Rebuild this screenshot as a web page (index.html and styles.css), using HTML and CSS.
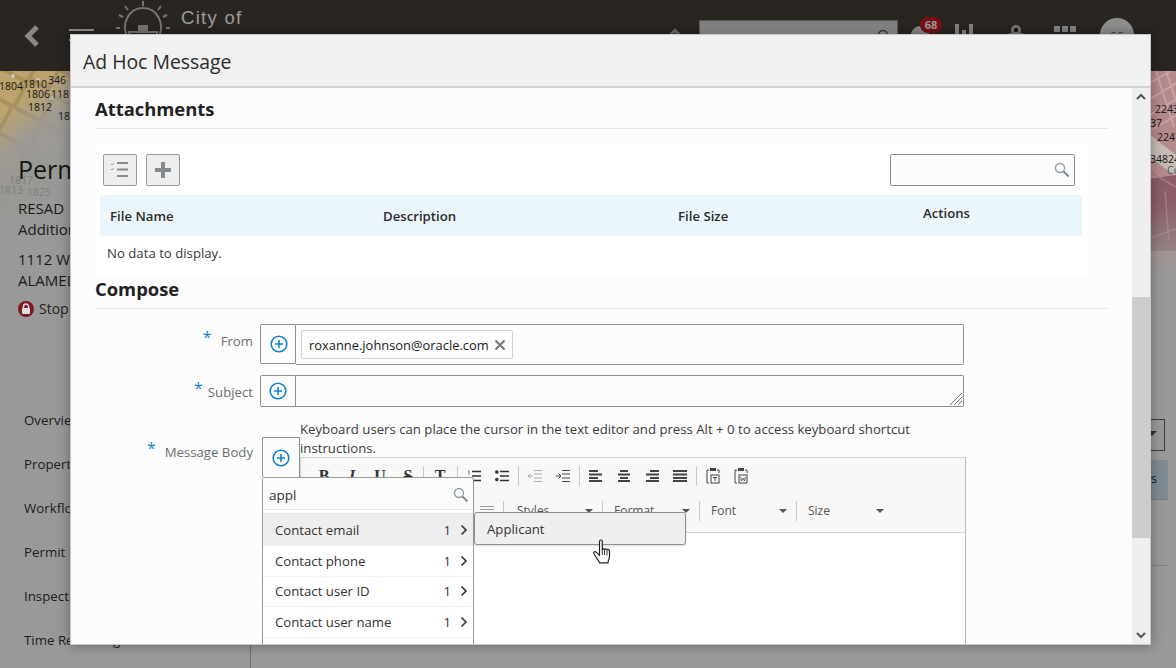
FILE: index.html
```html
<!DOCTYPE html>
<html lang="en">
<head>
<meta charset="utf-8">
<title>Ad Hoc Message</title>
<link rel="stylesheet" href="styles.css">
</head>
<body>
<div class="app">
  <header class="topbar">
    <svg class="back" viewBox="0 0 18 24" width="18" height="24"><path d="M14 3 5 12l9 9" fill="none" stroke="#e4e4e4" stroke-width="5"/></svg>
    <div class="burger"></div>
    <svg class="citylogo" viewBox="0 0 56 40" width="56" height="40"><g fill="none" stroke="#c4c4c4" stroke-width="2"><path d="M13 38C5 24 14 8 28 8s23 16 15 30"/><path d="M28 1v5M10 6l3 4M46 6l-3 4M4 15l4 2M52 15l-4 2M1 28h4M51 28h4"/><path d="M14 38v-6h10v-6h8v6h10v6"/><rect x="26" y="28" width="4" height="4" fill="#c4c4c4"/></g></svg>
    <div class="cityname">City of</div>
    <div class="topright">
      <svg class="hicon" viewBox="0 0 20 14" width="18" height="14"><path d="M1 14 10 5l8 9M4 9l6-6 6 6" fill="none" stroke="#b0b0b0" stroke-width="2"/></svg>
      <div class="topsearch"><svg viewBox="0 0 14 14" width="14" height="14"><circle cx="6" cy="6" r="4.500" fill="none" stroke="#555" stroke-width="1.300"/></svg></div>
      <div class="bell"><span class="bellcount">68</span></div>
      <div class="bars"><i></i><i></i><i></i></div>
      <svg class="pin" viewBox="0 0 24 20" width="24" height="20"><path d="M0 20 5 9h4l3 3 3-3h4l5 11z" fill="#c8c8c8"/><circle cx="12" cy="6" r="5" fill="#c8c8c8"/><circle cx="12" cy="6" r="2.200" fill="#29251f"/></svg>
      <div class="grid9"><i></i><i></i><i></i><i></i><i></i><i></i></div>
      <div class="avatar">SC</div>
    </div>
  </header>

  <div class="backdrop-page">
    <div class="navline"></div>
    <nav class="sidenav">
      <div>Overview</div><div>Property</div><div>Workflow</div><div>Permit Info</div><div>Inspections</div><div>Time Recording</div>
    </nav>
    <div class="rightbits">
      <div class="rdrop"></div>
      <div class="rtab">s</div>
      <div class="rrule"></div>
    </div>
  </div>
  <div class="scrim"></div>

  <div class="map">
    <svg class="mapsvg" viewBox="0 0 1176 220" width="1176" height="220">
      <defs>
        <linearGradient id="fadeL" x1="0" y1="0" x2="0.25" y2="1"><stop offset=".18" stop-color="#999" stop-opacity="0"/><stop offset=".38" stop-color="#999" stop-opacity=".88"/><stop offset=".8" stop-color="#999"/></linearGradient>
        <linearGradient id="fadeR" x1="0" y1="0" x2="0" y2="1"><stop offset=".6" stop-color="#999" stop-opacity="0"/><stop offset=".95" stop-color="#999"/></linearGradient>
      </defs>
      <rect x="0" y="0" width="72" height="220" fill="#a8905f"/>
      <g fill="#bda36c" transform="rotate(28 30 40)">
        <rect x="-18" y="-8" width="30" height="22"/><rect x="16" y="-8" width="18" height="18"/><rect x="38" y="-8" width="34" height="22"/>
        <rect x="-22" y="18" width="34" height="24"/><rect x="16" y="14" width="26" height="28"/><rect x="46" y="18" width="30" height="24"/>
        <rect x="-30" y="46" width="40" height="26"/><rect x="14" y="46" width="30" height="26"/><rect x="48" y="46" width="30" height="26"/>
        <rect x="-30" y="76" width="34" height="30"/><rect x="8" y="76" width="34" height="30"/>
      </g>
      <g fill="#c9c9c4"><circle cx="13" cy="5" r="2"/><circle cx="38" cy="9" r="2"/><circle cx="52" cy="27" r="2"/><circle cx="65" cy="36" r="2"/></g>
      <rect x="0" y="0" width="72" height="220" fill="url(#fadeL)"/>
      <g stroke="#8d8d8d" stroke-width=".7" fill="none"><path d="M2 114l16 12M0 122l10 8M0 130l6 4"/></g>

      <rect x="1148" y="0" width="28" height="220" fill="#b58a8d"/>
      <g stroke="#c9a3a3" stroke-width="2" fill="none"><path d="M1150 12l24-14M1150 28l30-18M1150 44l30-18M1150 60l30-18M1166 0l10 30M1156 0l18 56"/></g>
      <path d="M1148 62l28 22v22l-28-22z" fill="#c6bcb7"/>
      <path d="M1148 108l28-4v76h-28z" fill="#8c5d67"/>
      <g stroke="#a87a80" stroke-width="1.500" fill="none"><path d="M1148 100l28 16M1148 168l28-10M1165 120l4 50"/></g>
      <rect x="1148" y="0" width="28" height="220" fill="url(#fadeR)"/>
    </svg>
    <span class="mapnum n1">1804</span><span class="mapnum n2">1810</span><span class="mapnum n3">346</span>
    <span class="mapnum n4">1806</span><span class="mapnum n5">118</span><span class="mapnum n6">1812</span><span class="mapnum n7">18</span>
    <span class="mapnum n8 faint">1817</span><span class="mapnum n9 faint">1813</span><span class="mapnum n10 faint">1825</span>
    <span class="mapnum r1">2243</span><span class="mapnum r2">37</span><span class="mapnum r3">2247</span><span class="mapnum r4">34824</span><span class="mapnum r5">Ce</span>
  </div>

  <div class="pageinfo">
    <div class="perm">Perm</div>
    <div class="pline">RESAD</div>
    <div class="pline">Addition</div>
    <div class="pline addr">1112 W</div>
    <div class="pline">ALAMED</div>
    <div class="stop"><svg viewBox="0 0 16 16" width="16" height="16"><circle cx="8" cy="8" r="8" fill="#7a1a22"/><rect x="4" y="7" width="8" height="6" rx="1" fill="#ddd"/><path d="M5.500 7V5.500a2.500 2.500 0 0 1 5 0V7" fill="none" stroke="#ddd" stroke-width="1.500"/></svg>Stop</div>
  </div>

  <section class="dialog">
    <div class="dlg-head">Ad Hoc Message</div>
    <div class="dlg-body">
      <div class="dlg-content">
        <h2 class="sec-title first">Attachments</h2>
        <div class="att-panel">
          <div class="att-tools">
            <button class="tool-btn"><svg viewBox="0 0 20 18" width="20" height="18"><path d="M1 3l1 1 2-2M1 8l1 1 2-2" fill="none" stroke="#999"/><path d="M7 2h11M7 8.500h11M7 15h11" stroke="#8a8a8a" stroke-width="2"/></svg></button>
            <button class="tool-btn"><svg viewBox="0 0 16 16" width="16" height="16"><path d="M8 0v16M0 8h16" stroke="#858a8f" stroke-width="4"/></svg></button>
            <div class="att-search"><svg viewBox="0 0 16 16" width="16" height="16"><circle cx="6" cy="6" r="4.500" fill="none" stroke="#8e9aa3" stroke-width="1.300"/><path d="m9.500 9.500 5 5" stroke="#7d8a94" stroke-width="2"/></svg></div>
          </div>
          <div class="att-head"><span class="c-name">File Name</span><span class="c-desc">Description</span><span class="c-size">File Size</span><span class="c-act">Actions</span></div>
          <div class="att-empty">No data to display.</div>
        </div>
        <h2 class="sec-title compose">Compose</h2>
        <div class="row-from">
          <label class="flabel"><span class="req">*</span>From</label>
          <div class="addon"><svg class="plus" viewBox="0 0 18 18" width="18" height="18"><circle cx="9" cy="9" r="7.800" fill="none" stroke="#0f82cc" stroke-width="1.600"/><path d="M9 5v8M5 9h8" stroke="#0f82cc" stroke-width="1.600"/></svg></div>
          <div class="field"><span class="chip">roxanne.johnson@oracle.com<svg viewBox="0 0 12 12" width="12" height="12"><path d="m1.500 1.500 9 9M10.500 1.500l-9 9" stroke="#777" stroke-width="2"/></svg></span></div>
        </div>
        <div class="row-subject">
          <label class="flabel"><span class="req">*</span>Subject</label>
          <div class="addon short"><svg class="plus" viewBox="0 0 18 18" width="18" height="18"><circle cx="9" cy="9" r="7.800" fill="none" stroke="#0f82cc" stroke-width="1.600"/><path d="M9 5v8M5 9h8" stroke="#0f82cc" stroke-width="1.600"/></svg></div>
          <div class="field short"><svg class="grip" viewBox="0 0 14 14" width="14" height="14"><path d="M13 1 1 13M13 5l-8 8M13 9l-4 4" stroke="#777"/></svg></div>
        </div>
        <div class="row-body">
          <label class="flabel body-label"><span class="req">*</span>Message Body</label>
          <div class="addon body-addon"><svg class="plus" viewBox="0 0 18 18" width="18" height="18"><circle cx="9" cy="9" r="7.800" fill="none" stroke="#0f82cc" stroke-width="1.600"/><path d="M9 5v8M5 9h8" stroke="#0f82cc" stroke-width="1.600"/></svg></div>
          <div class="body-main">
            <p class="hint">Keyboard users can place the cursor in the text editor and press Alt + 0 to access keyboard shortcut instructions.</p>
            <div class="editor">
              <div class="ed-toolbar">
                <div class="ed-row r1">
                  <b class="g">B</b><b class="g i">I</b><b class="g">U</b><b class="g s">S</b><span class="sep first"></span><b class="g">T</b><span class="sep after-t"></span>
                  <svg class="ic tight" viewBox="0 0 14 12"><path d="M5 1.500h9M5 6h9M5 10.500h9" stroke="#333" stroke-width="1.300"/><path d="M1 1h1v4M1 8h2L1 11h2" fill="none" stroke="#555" stroke-width=".8"/></svg>
                  <svg class="ic" viewBox="0 0 14 12"><path d="M5 1.500h9M5 6h9M5 10.500h9" stroke="#333" stroke-width="1.300"/><circle cx="1.800" cy="2" r="1.800" fill="#333"/><circle cx="1.800" cy="9.500" r="1.800" fill="#333"/></svg>
                  <span class="sep"></span>
                  <svg class="ic tight dim" viewBox="0 0 14 12"><path d="M6 .5h8M6 4h8M6 8h8M6 11.500h8M5 6H0M2.500 3.500 0 6l2.500 2.500" fill="none" stroke="#aaa"/></svg>
                  <svg class="ic" viewBox="0 0 14 12"><path d="M6 .5h8M6 4h8M6 8h8M6 11.500h8M0 6h5M2.500 3.500 5 6 2.500 8.500" fill="none" stroke="#444"/></svg>
                  <span class="sep"></span>
                  <svg class="ic tight" viewBox="0 0 14 12"><path d="M0 1h9M0 4.500h13M0 8h9M0 11h13" stroke="#444" stroke-width="2"/></svg>
                  <svg class="ic" viewBox="0 0 14 12"><path d="M3 1h8M1 4.500h12M3 8h8M1 11h12" stroke="#444" stroke-width="2"/></svg>
                  <svg class="ic" viewBox="0 0 14 12"><path d="M5 1h9M1 4.500h13M5 8h9M1 11h13" stroke="#444" stroke-width="2"/></svg>
                  <svg class="ic" viewBox="0 0 14 12"><path d="M0 1h14M0 4.500h14M0 8h14M0 11h14" stroke="#444" stroke-width="2"/></svg>
                  <span class="sep"></span>
                  <svg class="ic clip tight" viewBox="0 0 14 16"><path d="M3 2H1v13h2M11 2h2v3" fill="none" stroke="#444"/><rect x="4" y="0" width="6" height="3" fill="#444"/><rect x="5" y="7" width="8" height="8" fill="none" stroke="#444"/><path d="M7 9.500h4M9 9.500V13" stroke="#444"/></svg>
                  <svg class="ic clip" viewBox="0 0 14 16"><path d="M3 2H1v13h2M11 2h2v3" fill="none" stroke="#444"/><rect x="4" y="0" width="6" height="3" fill="#444"/><rect x="5" y="7" width="8" height="8" fill="none" stroke="#444"/><path d="M6.500 9l1 4 1.500-3 1.500 3 1-4" fill="none" stroke="#444" stroke-width=".8"/></svg>
                </div>
                <div class="ed-row r2">
                  <svg class="ic hr" viewBox="0 0 14 12"><path d="M0 1.500h14M0 4.500h14" stroke="#999"/><path d="M0 9h14" stroke="#333" stroke-width="3"/></svg>
                  <span class="sep"></span>
                  <span class="combo w-styles">Styles</span><span class="sep flush"></span>
                  <span class="combo">Format</span><span class="sep flush"></span>
                  <span class="combo">Font</span><span class="sep flush"></span>
                  <span class="combo">Size</span>
                </div>
              </div>
              <div class="ed-area"></div>
            </div>
          </div>
        </div>
      </div>

      <div class="var-pop">
        <div class="var-search"><span>appl</span><svg viewBox="0 0 16 16" width="16" height="16"><circle cx="6" cy="6" r="4.500" fill="none" stroke="#8e9aa3" stroke-width="1.300"/><path d="m9.500 9.500 5 5" stroke="#7d8a94" stroke-width="2"/></svg></div>
        <ul class="var-list">
          <li class="active"><span>Contact email</span><em>1</em><svg viewBox="0 0 8 12" width="8" height="12"><path d="m1.500 1.500 4.500 4.500-4.500 4.500" fill="none" stroke="#333" stroke-width="1.600"/></svg></li>
          <li><span>Contact phone</span><em>1</em><svg viewBox="0 0 8 12" width="8" height="12"><path d="m1.500 1.500 4.500 4.500-4.500 4.500" fill="none" stroke="#333" stroke-width="1.600"/></svg></li>
          <li><span>Contact user ID</span><em>1</em><svg viewBox="0 0 8 12" width="8" height="12"><path d="m1.500 1.500 4.500 4.500-4.500 4.500" fill="none" stroke="#333" stroke-width="1.600"/></svg></li>
          <li><span>Contact user name</span><em>1</em><svg viewBox="0 0 8 12" width="8" height="12"><path d="m1.500 1.500 4.500 4.500-4.500 4.500" fill="none" stroke="#333" stroke-width="1.600"/></svg></li>
          <li></li>
        </ul>
      </div>
      <div class="sub-pop">Applicant</div>
      <svg class="hand" viewBox="0 0 18 26" width="18" height="26"><path d="M6.500 2.500c0-2 2.800-2 2.800 0v8l1.200-.6 1 .4 1.200-.4 1 .6 1.300-.2c1 .2 1.500 1 1.500 2v5c0 3-1.500 4-1.500 6.500H6.500c-.5-2-2-3-3-5l-2.500-4c-1-2 1-3 2.500-1.500l3 3z" fill="#fff" stroke="#222" stroke-width="1.200" stroke-linejoin="round"/><path d="M9.300 10v6M11.500 10v6M14 10.500v6" stroke="#222" stroke-width=".9"/></svg>

      <div class="scrollbar">
        <svg viewBox="0 0 10 7" width="10" height="7"><path d="m1 6 4-4 4 4" fill="none" stroke="#555" stroke-width="2"/></svg>
        <div class="thumb"></div>
        <svg viewBox="0 0 10 7" width="10" height="7"><path d="m1 1 4 4 4-4" fill="none" stroke="#555" stroke-width="2"/></svg>
      </div>
    </div>
  </section>
</div>
</body>
</html>
```
FILE: styles.css
```css
* { box-sizing: border-box; }
html, body { margin: 0; padding: 0; }
body { width: 1176px; height: 668px; overflow: hidden; font-family: "Open Sans", "Noto Sans", sans-serif; color: #2b2b2b; }
.app { position: relative; width: 1176px; height: 668px; overflow: hidden; background: #fff; }

.topbar { height: 71px; background: #453e38; display: flex; align-items: flex-start; position: relative; }
.back { margin: 24px 0 0 23px; flex: none; }
.burger { width: 25px; height: 12px; margin: 29px 0 0 28px; border-top: 2px solid #eee; border-bottom: 2px solid #eee; flex: none; }
.citylogo { margin: 0 0 0 21px; flex: none; }
.cityname { margin: 7px 0 0 10px; font-family: "Liberation Sans", sans-serif; font-size: 18.500px; color: #fff; letter-spacing: 1.300px; }
.topright { position: absolute; left: 664px; top: 0; width: 512px; height: 71px; }
.hicon { position: absolute; left: 2px; top: 26px; }
.topsearch { position: absolute; left: 35px; top: 20px; width: 199px; height: 30px; background: linear-gradient(180deg, #d0d0d0 0, #ffffff 60%); border-top: 1px solid #999; border-left: 1px solid #999; border-right: 1px solid #999; display: flex; justify-content: flex-end; padding: 8px 6px 0 0; }
.bell { position: absolute; left: 247px; top: 26px; width: 18px; height: 18px; border-radius: 9px; background: #ddd; }
.bellcount { position: absolute; left: 9px; top: -9px; width: 22px; height: 16px; border-radius: 8px; background: #c81b20; color: #fff; font-size: 11px; font-weight: 700; text-align: center; line-height: 16px; }
.bars { position: absolute; left: 291px; top: 24px; display: flex; gap: 3px; align-items: flex-end; height: 20px; }
.bars i { width: 4px; background: #ddd; height: 20px; }
.bars i:nth-child(2) { height: 14px; }
.pin { position: absolute; left: 340px; top: 24px; }
.grid9 { position: absolute; left: 390px; top: 26px; width: 22px; display: grid; grid-template-columns: repeat(3, 6px); gap: 2px 2px; }
.grid9 i { height: 6px; background: #ddd; }
.avatar { position: absolute; left: 436px; top: 18px; width: 34px; height: 34px; border-radius: 50%; background: #eee; color: #3a6e94; font-size: 11px; text-align: center; line-height: 36px; }

.backdrop-page { position: relative; height: 597px; background: #fff; }
.navline { position: absolute; left: 250px; top: 400px; bottom: 0; width: 1px; background: #bbb; }
.sidenav { position: absolute; left: 24px; top: 327px; font-size: 13.300px; color: #333; display: flex; flex-direction: column; }
.sidenav div { height: 44px; line-height: 44px; white-space: nowrap; }
.rightbits { position: absolute; left: 1120px; top: 348px; width: 56px; height: 160px; }
.rdrop { position: absolute; left: 0; top: 0; width: 45px; height: 32px; border: 1px solid #666; }
.rdrop::after { content: ""; position: absolute; right: 7px; top: 11px; border: 5px solid transparent; border-top-color: #555; border-bottom: 0; }
.rtab { position: absolute; left: 0; top: 41px; width: 48px; height: 40px; background: #d5e8f5; text-align: right; padding: 9px 11px 0 0; font-size: 13px; color: #0a3a5c; border-bottom: 1px solid #c0d8e8; }
.rrule { position: absolute; left: 0; top: 146px; width: 48px; height: 1px; background: #ddd; }

.scrim { position: absolute; inset: 0; background: rgba(0, 0, 0, .4); z-index: 3; }

.map { position: absolute; left: 0; top: 71px; width: 1176px; height: 220px; overflow: hidden; z-index: 3; }
.mapsvg { display: block; }
.mapnum { position: absolute; font-size: 10.500px; line-height: 14px; color: #141414; }
.faint { color: #7e7e7e; }
.n1 { left: -1px; top: 8px; } .n2 { left: 23px; top: 6px; } .n3 { left: 48px; top: 2px; }
.n4 { left: 26px; top: 16px; } .n5 { left: 51px; top: 16px; } .n6 { left: 28px; top: 29px; } .n7 { left: 58px; top: 38px; }
.n8 { left: 9px; top: 102px; } .n9 { left: -1px; top: 112px; } .n10 { left: 27px; top: 114px; }
.r1 { left: 1155px; top: 31px; } .r2 { left: 1150px; top: 45px; } .r3 { left: 1157px; top: 59px; } .r4 { left: 1150px; top: 81px; } .r5 { left: 1167px; top: 92px; color: #555; }

.pageinfo { position: absolute; left: 18px; top: 154px; z-index: 3; }
.perm { font-size: 25px; line-height: 30px; color: #141414; margin-bottom: 14px; }
.pline { font-size: 15px; line-height: 20.500px; white-space: nowrap; color: #1a1a1a; }
.addr { margin-top: 10px; }
.stop { margin-top: 9px; display: flex; align-items: center; gap: 5px; font-size: 14px; color: #222; }

.dialog { position: absolute; left: 70px; top: 34px; width: 1081px; height: 611px; z-index: 4; background: #fff; border: 1px solid #c9c9c9; box-shadow: 0 0 12px rgba(0,0,0,.35); display: flex; flex-direction: column; }
.dlg-head { height: 53px; flex: none; background: #f1f1f1; border-bottom: 2px solid #d4d4d4; padding-left: 12px; font-size: 19.400px; line-height: 53px; color: #2b2b2b; }
.dlg-body { position: relative; flex: 1; background: #fcfcfc; overflow: hidden; }
.dlg-content { padding: 0 42px 0 24px; }
.sec-title { margin: 0; font-size: 18.400px; font-weight: 700; color: #222; line-height: 26px; border-bottom: 1px solid #e6e6e6; height: 41px; padding-top: 8px; }
.att-panel { margin-top: 15px; width: 993px; height: 130px; background: #fff; padding-left: 5px; }
.att-tools { height: 51px; padding: 10px 0 0 3px; display: flex; gap: 9px; }
.tool-btn { width: 34px; height: 32px; background: #eeeeee; border: 1px solid #989898; border-radius: 2px; padding: 0; display: flex; align-items: center; justify-content: center; }
.att-search { margin-left: auto; margin-right: 13px; width: 185px; height: 32px; border: 1px solid #8f8f8f; border-radius: 2px; background: #fcfcfc; display: flex; align-items: center; justify-content: flex-end; padding-right: 4px; }
.att-head { width: 982px; height: 41px; background: #ebf6fc; position: relative; font-size: 13.200px; font-weight: 600; color: #2b2b2b; line-height: 41px; }
.att-head span { position: absolute; top: 1px; }
.c-name { left: 10px; } .c-desc { left: 283px; } .c-size { left: 578px; } .c-act { left: 823px; top: -2px !important; }
.att-empty { font-size: 13.200px; padding: 8px 0 0 7px; color: #3a3a3a; }
.sec-title.compose { height: 35px; padding-top: 2px; }

.row-from, .row-subject, .row-body { position: relative; display: flex; }
.row-from { margin-top: 15px; padding-left: 165px; height: 41px; }
.row-subject { margin-top: 10px; padding-left: 165px; height: 32px; }
.row-body { margin-top: 30px; padding-left: 167px; }
.flabel { position: absolute; left: 0; width: 158px; text-align: right; font-size: 13.200px; color: #6e6e6e; padding-top: 5px; white-space: nowrap; }
.body-label { padding-top: 3px; }
.req { color: #0f82cc; font-size: 16px; margin-right: 9px; position: relative; top: -3px; }
.row-subject .req { margin-right: 5px; }
.addon { width: 36px; height: 40px; flex: none; border: 1px solid #8f8f8f; border-radius: 2px 0 0 2px; display: flex; align-items: center; justify-content: center; background: #fcfcfc; }
.row-from .addon { padding-left: 1px; }
.addon.short { height: 32px; }
.field { width: 668px; height: 41px; border: 1px solid #8f8f8f; border-left: 0; border-radius: 0 2px 2px 0; background: #fcfcfc; padding: 5px; position: relative; }
.field.short { height: 32px; }
.chip { display: inline-flex; align-items: center; gap: 5px; height: 29px; padding: 0 6px 0 7px; border: 1px solid #d2d2d2; border-radius: 2px; background: #fcfcfc; font-size: 12.900px; color: #1a1a1a; white-space: nowrap; }
.grip { position: absolute; right: 0; bottom: 0; }

.body-addon { width: 38px; height: 40px; border-bottom: 0; }
.body-main { width: 666px; }
.hint { margin: -17px 0 -1px; font-size: 13.200px; line-height: 19px; color: #3a3a3a; }
.editor { height: 200px; border: 1px solid #d4d4d4; border-right: 1px solid #bbb; background: #fff; }
.ed-toolbar { height: 75px; background: #f8f8f8; border-bottom: 1px solid #d4d4d4; padding-left: 9px; }
.ed-row { display: flex; align-items: center; }
.ed-row.r1 { height: 36px; margin-bottom: -1px; }
.ed-row.r2 { height: 36px; padding-left: 170px; }
.g { font-family: "Liberation Serif", serif; font-size: 16px; width: 28px; text-align: center; color: #333; flex: none; }
.g.i { font-style: italic; }
.g.s { text-decoration: line-through; }
.sep { width: 1px; height: 20px; background: #c8c8c8; margin-left: 9px; flex: none; }
.sep.first { margin: 0 2px 0 1px; }
.sep.after-t { margin-left: 3px; }
.sep.flush { margin-left: 0; }
.ic { width: 14px; height: 12px; margin-left: 14px; flex: none; }
.ic.tight { margin-left: 9px; }
.ic.clip { height: 16px; }
.ic.hr { margin-left: 0; }
.combo { font-size: 12px; color: #555; position: relative; display: block; width: 96px; height: 18px; line-height: 18px; padding-left: 11px; flex: none; }
.w-styles { width: 98px; padding-left: 13px; }
.combo::after { content: ""; position: absolute; right: 9px; top: 7px; border: 4px solid transparent; border-top-color: #555; border-bottom: 0; }
.ed-area { height: 124px; background: #fff; }

.var-pop { position: absolute; left: 191px; top: 389px; width: 212px; height: 180px; border: 1px solid #9a9a9a; border-bottom: 0; background: #fff; border-radius: 3px 3px 0 0; overflow: hidden; }
.var-search { height: 32px; display: flex; align-items: center; justify-content: space-between; padding: 2px 4px 0 6px; font-size: 13.500px; color: #333; border-bottom: 1px solid #e4e4e4; background: #fcfcfc; }
.var-list { list-style: none; margin: 3px 0 0; padding: 0; border-top: 1px solid #e4e4e4; }
.var-list li { height: 30.500px; display: flex; align-items: center; padding: 0 5px 0 12px; font-size: 13.200px; color: #333; border-bottom: 1px solid #eee; }
.var-list li.active { height: 32px; background: #eeeeee; }
.var-list span { flex: 1; }
.var-list em { font-style: normal; margin-right: 9px; }
.sub-pop { position: absolute; left: 403px; top: 424px; width: 212px; height: 33px; border: 1px solid #8f8f8f; border-radius: 3px; background: #efefef; padding-left: 12px; line-height: 33px; font-size: 13.200px; color: #333; box-shadow: 0 1px 2px rgba(0,0,0,.15); }
.hand { position: absolute; left: 522px; top: 451px; }
.scrollbar { position: absolute; right: 0; top: 0; bottom: 0; width: 18px; background: #efefef; display: flex; flex-direction: column; align-items: center; justify-content: space-between; padding: 5px 0; }
.thumb { position: absolute; left: 0; right: 0; top: 209px; height: 241px; background: #cdcdcd; }
```
